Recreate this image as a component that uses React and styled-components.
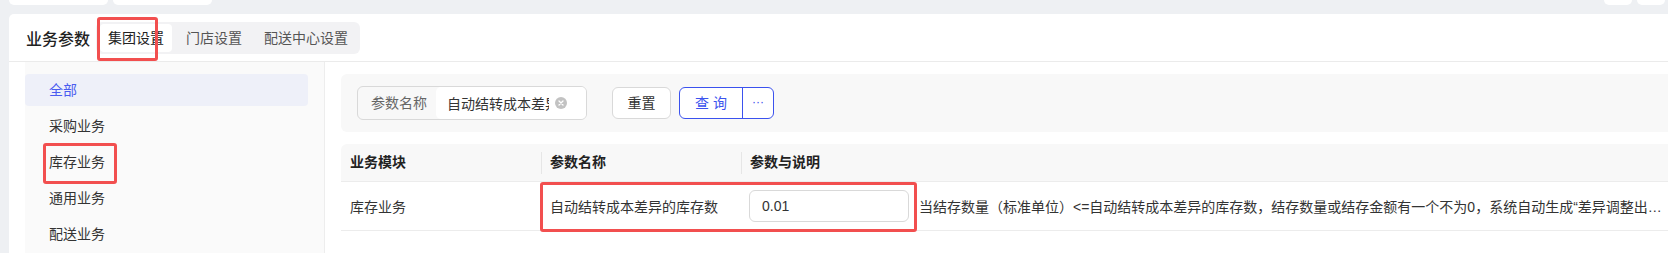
import React from "react";
import styled, { createGlobalStyle, css } from "styled-components";

const GlobalStyle = createGlobalStyle`
  html, body {
    margin: 0;
    padding: 0;
    background: #eef0f3;
    overflow: hidden;
  }
  body {
    font-family: "Liberation Sans", "Noto Sans CJK SC", sans-serif;
    font-size: 14px;
    color: #333;
  }
  * {
    box-sizing: border-box;
  }
`;

const NAV = ["全部", "采购业务", "库存业务", "通用业务", "配送业务"];

const ClearIcon = () => (
  <svg width="12" height="12" viewBox="0 0 12 12">
    <circle cx="6" cy="6" r="6" fill="#c2c2c2" />
    <path d="M4 4l4 4M8 4l-4 4" stroke="#fff" strokeWidth="1.3" strokeLinecap="round" />
  </svg>
);

const App = () => {
  return (
    <Page>
      <GlobalStyle />
      <TopBar>
        <TopTab $w={99} />
        <TopTab $w={99} />
        <TopSpacer />
        <TopTab $w={28} />
        <TopTab $w={28} />
      </TopBar>
      <Card>
        <Header>
          <Title>业务参数</Title>
          <Segmented>
            <Seg $active>
              集团设置
              <Mark $left={-3} $top={-7} $w={61} $h={44} />
            </Seg>
            <Seg>门店设置</Seg>
            <Seg>配送中心设置</Seg>
          </Segmented>
        </Header>
        <Body>
          <Sidebar>
            {NAV.map((name, i) => (
              <NavItem key={name} $active={i === 0}>
                {name}
                {name === "库存业务" && <Mark $left={18} $top={-3} $w={74} $h={41} />}
              </NavItem>
            ))}
          </Sidebar>
          <Main>
            <SearchPanel>
              <Field>
                <FieldLabel>参数名称</FieldLabel>
                <FieldValue>
                  <ValueText>自动结转成本差异的库存数</ValueText>
                  <ClearIcon />
                </FieldValue>
              </Field>
              <Button>重置</Button>
              <SplitButton>
                <SplitMain>查 询</SplitMain>
                <SplitMore>···</SplitMore>
              </SplitButton>
            </SearchPanel>
            <Table>
              <HeadRow>
                <HeadCell>业务模块</HeadCell>
                <HeadCell $divider>参数名称</HeadCell>
                <HeadCell $divider>参数与说明</HeadCell>
              </HeadRow>
              <Row>
                <Cell>库存业务</Cell>
                <Cell>自动结转成本差异的库存数</Cell>
                <Cell $last>
                  <ValueInput readOnly value="0.01" />
                  <Description>
                    当结存数量（标准单位）&lt;=自动结转成本差异的库存数，结存数量或结存金额有一个不为0，系统自动生成“差异调整出库单”进行成本差异结转
                  </Description>
                </Cell>
                <Mark $left={199} $top={0} $w={377} $h={50} />
              </Row>
            </Table>
          </Main>
        </Body>
      </Card>
    </Page>
  );
};

const Page = styled.div`
  width: 1668px;
  height: 253px;
  overflow: hidden;
`;

const TopBar = styled.div`
  display: flex;
  align-items: flex-start;
  gap: 5px;
  height: 14px;
  padding: 0 3px 0 9px;
`;

const TopTab = styled.div`
  width: ${(p) => p.$w}px;
  height: 5px;
  background: #fff;
  border-radius: 0 0 5px 5px;
`;

const TopSpacer = styled.div`
  flex: 1;
`;

const Card = styled.div`
  margin-left: 9px;
  background: #fff;
  border-radius: 5px 0 0 0;
  height: 239px;
`;

const Header = styled.div`
  display: flex;
  align-items: center;
  gap: 6px;
  height: 48px;
  padding-left: 17px;
  border-bottom: 1px solid #ebebeb;
`;

const Title = styled.div`
  font-size: 16px;
  font-weight: 500;
  color: #222;
`;

const Segmented = styled.div`
  display: flex;
  gap: 6px;
  padding: 2px 4px;
  background: #f2f2f4;
  border-radius: 6px;
`;

const Seg = styled.div`
  position: relative;
  height: 28px;
  line-height: 28px;
  padding: 0 8px;
  border-radius: 4px;
  color: #555;
  ${(p) =>
    p.$active &&
    css`
      background: #fff;
      color: #222;
    `}
`;

const Mark = styled.div`
  position: absolute;
  left: ${(p) => p.$left}px;
  top: ${(p) => p.$top}px;
  width: ${(p) => p.$w}px;
  height: ${(p) => p.$h}px;
  border: 3px solid #f24f4f;
  border-radius: 3px;
  pointer-events: none;
  z-index: 2;
`;

const Body = styled.div`
  display: flex;
  padding-left: 16px;
`;

const Sidebar = styled.div`
  width: 300px;
  flex-shrink: 0;
  display: flex;
  flex-direction: column;
  gap: 4px;
  padding: 12px 16px 0 0;
  background: #fafafa;
  border-right: 1px solid #ededed;
  height: 191px;
`;

const NavItem = styled.div`
  position: relative;
  height: 32px;
  line-height: 32px;
  padding-left: 24px;
  border-radius: 4px;
  color: #333;
  ${(p) =>
    p.$active &&
    css`
      background: #eef0f9;
      color: #4a5cf0;
    `}
`;

const Main = styled.div`
  flex: 1;
  min-width: 0;
  padding: 12px 0 0 16px;
`;

const SearchPanel = styled.div`
  display: flex;
  align-items: center;
  height: 58px;
  padding: 0 16px;
  background: #f8f8f8;
  border-radius: 6px 0 0 6px;
`;

const Field = styled.div`
  display: flex;
  width: 230px;
  height: 34px;
  border: 1px solid #d9d9d9;
  border-radius: 6px;
  margin-right: 25px;
`;

const FieldLabel = styled.div`
  width: 78px;
  padding-left: 13px;
  line-height: 32px;
  color: #666;
`;

const FieldValue = styled.div`
  flex: 1;
  min-width: 0;
  display: flex;
  align-items: center;
  gap: 6px;
  padding: 0 19px 0 11px;
  background: #fff;
  border-radius: 5px;
`;

const ValueText = styled.div`
  flex: 1;
  min-width: 0;
  overflow: hidden;
  white-space: nowrap;
  color: #333;
`;

const Button = styled.div`
  width: 59px;
  height: 32px;
  line-height: 30px;
  text-align: center;
  border: 1px solid #d9d9d9;
  border-radius: 6px;
  background: #fff;
  color: #333;
  margin-right: 8px;
`;

const SplitButton = styled.div`
  display: flex;
  height: 32px;
  border: 1px solid #3b52ee;
  border-radius: 6px;
  background: #fff;
  color: #3b52ee;
`;

const SplitMain = styled.div`
  width: 62px;
  line-height: 30px;
  text-align: center;
`;

const SplitMore = styled.div`
  width: 31px;
  line-height: 28px;
  text-align: center;
  border-left: 1px solid #3b52ee;
  font-size: 12px;
`;

const Table = styled.div`
  margin-top: 12px;
`;

const columns = css`
  display: grid;
  grid-template-columns: 200px 200px minmax(0, 1fr);
  align-items: center;
`;

const HeadRow = styled.div`
  ${columns}
  height: 38px;
  background: #f8f8f8;
  border-bottom: 1px solid #ececec;
  border-radius: 6px 0 0 0;
  font-weight: 600;
  color: #222;
`;

const HeadCell = styled.div`
  position: relative;
  padding: 0 9px;
  line-height: 37px;
  ${(p) =>
    p.$divider &&
    css`
      &::before {
        content: "";
        position: absolute;
        left: 0;
        top: 8px;
        width: 1px;
        height: 22px;
        background: #e6e6e6;
      }
    `}
`;

const Row = styled.div`
  ${columns}
  position: relative;
  height: 49px;
  border-bottom: 1px solid #ececec;
`;

const Cell = styled.div`
  display: flex;
  align-items: center;
  gap: ${(p) => (p.$last ? 10 : 11)}px;
  min-width: 0;
  padding: 0 ${(p) => (p.$last ? 0 : 6)}px 0 9px;
  color: #333;
`;

const ValueInput = styled.input`
  flex-shrink: 0;
  width: 160px;
  height: 32px;
  margin-left: -1px;
  padding: 0 12px;
  border: 1px solid #d9d9d9;
  border-radius: 6px;
  font: inherit;
  color: #333;
  outline: none;
`;

const Description = styled.div`
  flex: 1;
  min-width: 0;
  overflow: hidden;
  white-space: nowrap;
  text-overflow: ellipsis;
`;

export default App;
